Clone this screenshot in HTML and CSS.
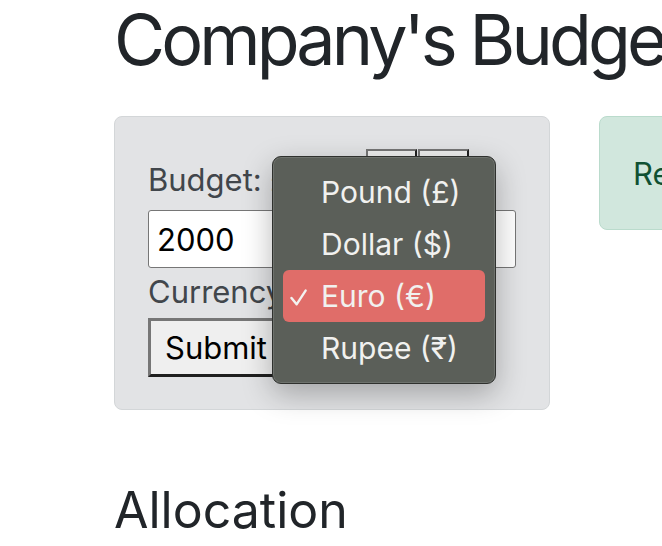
FILE: index.html
```html
<!DOCTYPE html>
<html lang="en">
<head>
<meta charset="utf-8">
<title>Company's Budget Allocation</title>
<link rel="stylesheet" href="styles.css">
</head>
<body>
<div class="page">
  <h1 class="title">Company's Budget Allocation</h1>
  <div class="row">
    <div class="card">
      <div class="budget-line">
        <span class="label">Budget: £</span>
        <span class="step-btns">
          <button class="step" type="button" aria-label="increase"></button>
          <button class="step" type="button" aria-label="decrease"></button>
        </span>
      </div>
      <input class="budget-input" type="text" value="2000">
      <div class="currency-line">
        <span class="label">Currency</span>
      </div>
      <button class="submit" type="button">Submit</button>

      <div class="menu">
        <div class="menu-item">Pound (£)</div>
        <div class="menu-item">Dollar ($)</div>
        <div class="menu-item selected">
          <svg class="check" viewBox="0 0 17 17" width="17" height="17" aria-hidden="true">
            <path d="M1.5 9 L6.6 15.3 L15.6 1.6" fill="none" stroke="#f3f3f1" stroke-width="2.4" stroke-linecap="round" stroke-linejoin="round"/>
          </svg>
          Euro (€)
        </div>
        <div class="menu-item">Rupee (₹)</div>
      </div>
    </div>
    <div class="remaining">Remaining: £1040</div>
  </div>
  <h2 class="subtitle">Allocation</h2>
</div>
</body>
</html>
```

FILE: styles.css
```css
html, body {
  margin: 0;
  padding: 0;
  background: #ffffff;
  overflow: hidden;
}

.page {
  width: 662px;
  height: 546px;
  padding-left: 114px;
  box-sizing: border-box;
  font-family: Inter, "Noto Sans", "Liberation Sans", sans-serif;
  color: #212529;
  overflow: hidden;
}

.title {
  margin: 0 0 36px 0;
  font-size: 70px;
  font-weight: 400;
  line-height: 80px;
  white-space: nowrap;
  letter-spacing: -3.9px;
}

.row {
  display: flex;
  gap: 49px;
  align-items: flex-start;
  width: 1000px;
}

.card {
  position: relative;
  width: 436px;
  box-sizing: border-box;
  background: #e2e3e5;
  border: 1px solid #d3d6d8;
  border-radius: 8px;
  padding: 32px 33px 32px 33px;
  color: #41464b;
}

.budget-line {
  display: flex;
  align-items: flex-end;
  height: 51px;
}

.label {
  font-size: 31px;
  line-height: 40px;
  white-space: nowrap;
}

.step-btns {
  display: flex;
  align-self: flex-start;
  margin-left: 77px;
}

.step {
  width: 51px;
  height: 51px;
  margin: 0 1px 0 0;
  background: #efefef;
  border: 2px outset #767676;
  font-family: inherit;
  font-size: 24px;
}

.budget-input {
  display: block;
  margin-top: 10px;
  width: 368px;
  height: 58px;
  box-sizing: border-box;
  border: 1px solid #767676;
  border-radius: 3px;
  padding: 0 8px;
  background: #ffffff;
  font-family: inherit;
  font-size: 31px;
  color: #000000;
}

.currency-line {
  margin-top: 4px;
  height: 40px;
}

.submit {
  display: block;
  margin-top: 6px;
  height: 59px;
  padding: 0 14px;
  background: #efefef;
  border-style: solid;
  border-width: 3px;
  border-color: #767676 #1f1f1f #1f1f1f #767676;
  font-family: inherit;
  font-size: 31px;
  color: #000000;
  width: 150px;
  text-align: left;
}

.menu {
  position: absolute;
  left: 157px;
  top: 39px;
  width: 224px;
  height: 228px;
  box-sizing: border-box;
  padding: 9px 10px 9px 10px;
  background: #5b5f59;
  border: 1px solid #2f312e;
  border-radius: 9px;
  box-shadow: inset 0 0 0 1px rgba(255,255,255,0.12), 0 10px 30px rgba(0,0,0,0.28);
}

.menu-item {
  display: flex;
  align-items: center;
  height: 52px;
  padding-left: 38px;
  border-radius: 6px;
  font-size: 30px;
  color: #f1f1ef;
  white-space: nowrap;
  position: relative;
}

.menu-item.selected {
  background: #e06d69;
}

.check {
  position: absolute;
  left: 7px;
  top: 19px;
}

.remaining {
  flex: 0 0 436px;
  box-sizing: border-box;
  height: 114px;
  background: #d1e7dd;
  border: 1px solid #badbcc;
  border-radius: 8px;
  padding: 0 33px;
  display: flex;
  align-items: center;
  font-size: 31px;
  color: #0f5132;
  white-space: nowrap;
}

.subtitle {
  margin: 70px 0 0 0;
  font-size: 50px;
  font-weight: 400;
  line-height: 60px;
}
```
